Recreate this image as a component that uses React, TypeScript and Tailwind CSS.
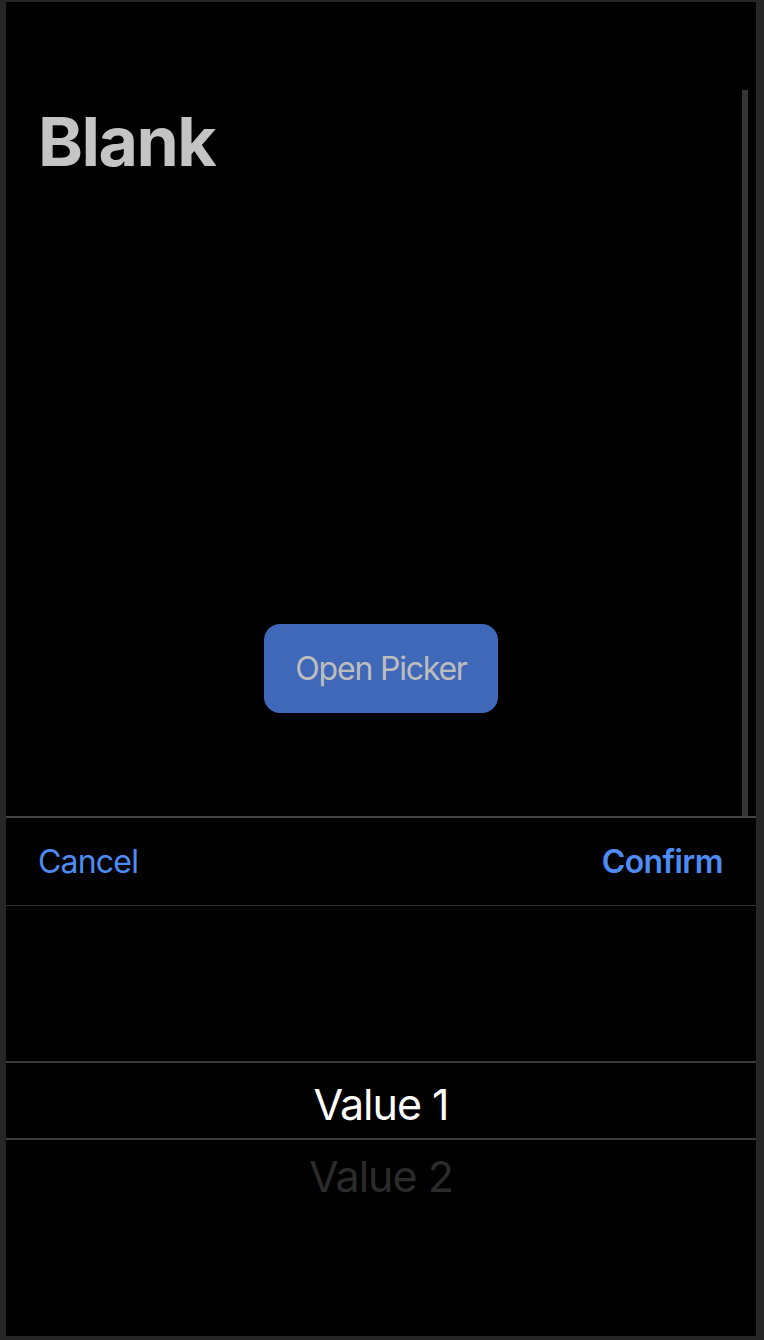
import React from "react";

export default function App() {
  const font = { fontFamily: "Inter, 'Noto Sans', sans-serif" };
  return (
    <div
      className="w-[764px] h-[1340px] bg-[#262626] pl-[6px] pt-[2px] pr-[8px] pb-[4px]"
      style={font}
    >
      <div className="w-full h-full bg-black flex flex-col">
        {/* top content */}
        <div className="relative h-[816px] flex flex-col border-b-2 border-[#444444]">
          <div className="pt-[105px] pl-[32px] text-[68px] leading-none font-bold text-[#c4c4c4] tracking-[-1.5px]">
            Blank
          </div>
          <div className="mt-[449px] flex justify-center">
            <button className="w-[234px] h-[89px] rounded-[16px] bg-[#3f68b9] text-[#bdbdbd] text-[32px] leading-none tracking-[-1.2px]">
              Open Picker
            </button>
          </div>
          <div className="absolute right-[8px] top-[88px] bottom-0 w-[6px] bg-[#353535]" />
        </div>
        {/* header */}
        <div className="h-[88px] flex items-center justify-between pl-[32px] pr-[33px] border-b border-[#333333] text-[32px] leading-none text-[#4d8cf5]">
          <span className="tracking-[-0.8px]">Cancel</span>
          <span className="font-semibold tracking-[-0.6px]">Confirm</span>
        </div>
        {/* picker */}
        <div className="flex-1 flex flex-col pt-[155px]">
          <div className="h-[79px] border-y-2 border-[#3a3a3a] flex items-center justify-center pt-[8px] text-[43px] leading-none text-white tracking-[-1px]">
            Value 1
          </div>
          <div className="mt-[15px] flex justify-center text-[43px] leading-none text-[#2b2b2b] tracking-[-1px]">
            Value 2
          </div>
        </div>
      </div>
    </div>
  );
}
